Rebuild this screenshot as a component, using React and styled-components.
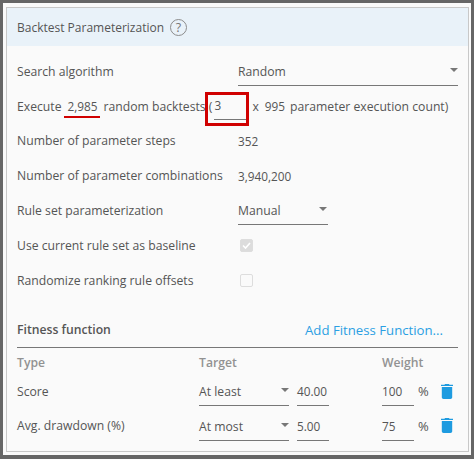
import React from "react";
import styled, { createGlobalStyle } from "styled-components";

const GlobalStyle = createGlobalStyle`
  html, body {
    margin: 0;
    padding: 0;
    width: 474px;
    height: 459px;
    overflow: hidden;
    background: #666;
  }
  body {
    font-family: "Open Sans", "Liberation Sans", sans-serif;
    font-size: 12px;
    color: #555;
  }
`;

const Frame = styled.div`
  box-sizing: border-box;
  position: relative;
  width: 474px;
  height: 459px;
  padding: 3px 3px 4px 3px;
  background: #666;
`;

const Panel = styled.div`
  box-sizing: border-box;
  height: 100%;
  background: #fafafa;
  padding: 4px 2px 3px 3px;
  display: flex;
`;

const Inner = styled.div`
  flex: 1;
  border: 1px solid #c8c8c8;
  display: flex;
  flex-direction: column;
  min-width: 0;
`;

const Header = styled.div`
  height: 38px;
  flex: none;
  background: #e9f2f9;
  display: flex;
  align-items: center;
  gap: 6px;
  padding-left: 10px;
  font-size: 12px;
  color: #555;
`;

const HelpIcon = styled.span`
  box-sizing: border-box;
  width: 17px;
  height: 17px;
  border: 1.5px solid #8c8c8c;
  border-radius: 50%;
  display: flex;
  align-items: center;
  justify-content: center;
  font-size: 12.5px;
  color: #777;
`;

const Body = styled.div`
  padding: 8px 10px 0;
`;

const Row = styled.div`
  height: 34.8px;
  display: grid;
  grid-template-columns: 221px 220px;
  align-items: center;
`;

const Label = styled.div`
  font-size: 12.2px;
  white-space: nowrap;
  color: #555;
`;

const Value = styled.div`
  font-size: 11.8px;
  color: #555;
`;

const Select = styled.div`
  box-sizing: border-box;
  display: flex;
  align-items: center;
  justify-content: space-between;
  width: ${(p) => p.$width}px;
  height: ${(p) => p.$height || 29}px;
  margin-top: ${(p) => p.$top || 0}px;
  padding-top: ${(p) => (p.$height ? 0 : 1)}px;
  padding-bottom: ${(p) => (p.$height ? 2 : 0)}px;
  border-bottom: 1px solid #777;
  padding-right: ${(p) => p.$pad || 0}px;
  font-size: 12.2px;
  color: #555;
`;

const Caret = styled.span`
  width: 0;
  height: 0;
  border-left: 4px solid transparent;
  border-right: 4px solid transparent;
  border-top: 4px solid #777;
  margin-bottom: 3px;
`;

const ExecuteRow = styled.div`
  height: 34.8px;
  display: flex;
  align-items: center;
  font-size: 12.2px;
  color: #555;
  white-space: nowrap;
`;

const InlineNumber = styled.span`
  font-size: 11.8px;
  margin: 0 ${(p) => p.$right || 5}px 0 ${(p) => p.$left || 5}px;
`;

const CountInput = styled.span`
  box-sizing: border-box;
  display: inline-block;
  width: 32px;
  height: 28px;
  line-height: 27px;
  font-size: 11.8px;
  border-bottom: 1px solid #777;
  margin: 0 6px 0 2px;
`;

const Check = styled.span`
  box-sizing: border-box;
  width: 13px;
  height: 13px;
  margin-left: 2px;
  border: 1px solid #ddd;
  border-radius: 2px;
  background: ${(p) => (p.$on ? "#dcdcdc" : "#fafafa")};
  display: flex;
  align-items: center;
  justify-content: center;
`;

const FitnessHead = styled.div`
  margin-top: 15.4px;
  height: 35px;
  box-sizing: border-box;
  display: flex;
  align-items: center;
  justify-content: space-between;
  border-bottom: 1px solid #777;
  width: 441px;
  padding: 0 15px 0 0;
`;

const FitnessTitle = styled.div`
  font-size: 12.2px;
  font-weight: 600;
  color: #555;
`;

const AddLink = styled.a`
  font-size: 13.2px;
  color: #2b9fe3;
`;

const FitnessGrid = styled.div`
  display: grid;
  grid-template-columns: 182px 98px 85px 32px 4px 23px 17px;
  width: 441px;
`;

const ColHead = styled.div`
  box-sizing: border-box;
  height: 26px;
  padding-top: 4px;
  display: flex;
  align-items: center;
  font-size: 12.2px;
  font-weight: 600;
  color: #929292;
  grid-column: ${(p) => p.$col || "auto"};
`;

const Cell = styled.div`
  height: 34.5px;
  display: flex;
  align-items: center;
  font-size: 12.2px;
  color: #555;
  grid-column: ${(p) => p.$col || "auto"};
`;

const NumberInput = styled.div`
  box-sizing: border-box;
  width: 32px;
  height: 26px;
  margin-top: 4px;
  line-height: 23px;
  border-bottom: 1px solid #777;
  font-size: 11.8px;
  color: #555;
`;

const Percent = styled.span`
  font-size: 13px;
`;

const TrashIcon = () => (
  <svg width="12" height="15" viewBox="0 0 12 15" fill="#1e9be0">
    <path d="M4 0h4l.5 .8H12V2H0V.8h3.5z" />
    <path d="M.8 3h10.4v10.3c0 .9-.8 1.7-1.7 1.7h-7c-.9 0-1.7-.8-1.7-1.7z" />
  </svg>
);

const RedUnderline = styled.div`
  position: absolute;
  left: 64px;
  top: 116px;
  width: 36px;
  height: 2px;
  background: #d00000;
`;

const RedBox = styled.div`
  position: absolute;
  left: 205px;
  top: 92px;
  width: 38px;
  height: 28px;
  border: 3px solid #d00000;
`;

const rows = [
  { type: "Score", target: "At least", value: "40.00", weight: "100" },
  { type: "Avg. drawdown (%)", target: "At most", value: "5.00", weight: "75" },
];

export default function App() {
  return (
    <Frame>
      <GlobalStyle />
      <Panel>
        <Inner>
          <Header>
            Backtest Parameterization
            <HelpIcon>?</HelpIcon>
          </Header>
          <Body>
            <Row>
              <Label>Search algorithm</Label>
              <Select $width={220}>
                Random <Caret />
              </Select>
            </Row>
            <ExecuteRow>
              Execute
              <InlineNumber $left={6} $right={6}>2,985</InlineNumber>
              random backtests (
              <CountInput>3</CountInput>
              x<InlineNumber $left={6} $right={5}>995</InlineNumber>
              parameter execution count)
            </ExecuteRow>
            <Row>
              <Label>Number of parameter steps</Label>
              <Value>352</Value>
            </Row>
            <Row>
              <Label>Number of parameter combinations</Label>
              <Value>3,940,200</Value>
            </Row>
            <Row>
              <Label>Rule set parameterization</Label>
              <Select $width={90} $pad={1}>
                Manual <Caret />
              </Select>
            </Row>
            <Row>
              <Label>Use current rule set as baseline</Label>
              <Check $on>
                <svg width="11" height="11" viewBox="0 0 11 11">
                  <path d="M2 5.5 L4.5 8 L9 3" fill="none" stroke="#fff" strokeWidth="1.6" />
                </svg>
              </Check>
            </Row>
            <Row>
              <Label>Randomize ranking rule offsets</Label>
              <Check />
            </Row>
            <FitnessHead>
              <FitnessTitle>Fitness function</FitnessTitle>
              <AddLink>Add Fitness Function...</AddLink>
            </FitnessHead>
            <FitnessGrid>
              <ColHead>Type</ColHead>
              <ColHead>Target</ColHead>
              <ColHead $col="4 / 8">Weight</ColHead>
              {rows.map((r) => (
                <React.Fragment key={r.type}>
                  <Cell>{r.type}</Cell>
                  <Cell>
                    <Select $width={90} $height={26} $top={4}>
                      {r.target} <Caret />
                    </Select>
                  </Cell>
                  <Cell>
                    <NumberInput>{r.value}</NumberInput>
                  </Cell>
                  <Cell>
                    <NumberInput>{r.weight}</NumberInput>
                  </Cell>
                  <Cell $col="6">
                    <Percent>%</Percent>
                  </Cell>
                  <Cell>
                    <TrashIcon />
                  </Cell>
                </React.Fragment>
              ))}
            </FitnessGrid>
          </Body>
        </Inner>
      </Panel>
      <RedUnderline />
      <RedBox />
    </Frame>
  );
}
